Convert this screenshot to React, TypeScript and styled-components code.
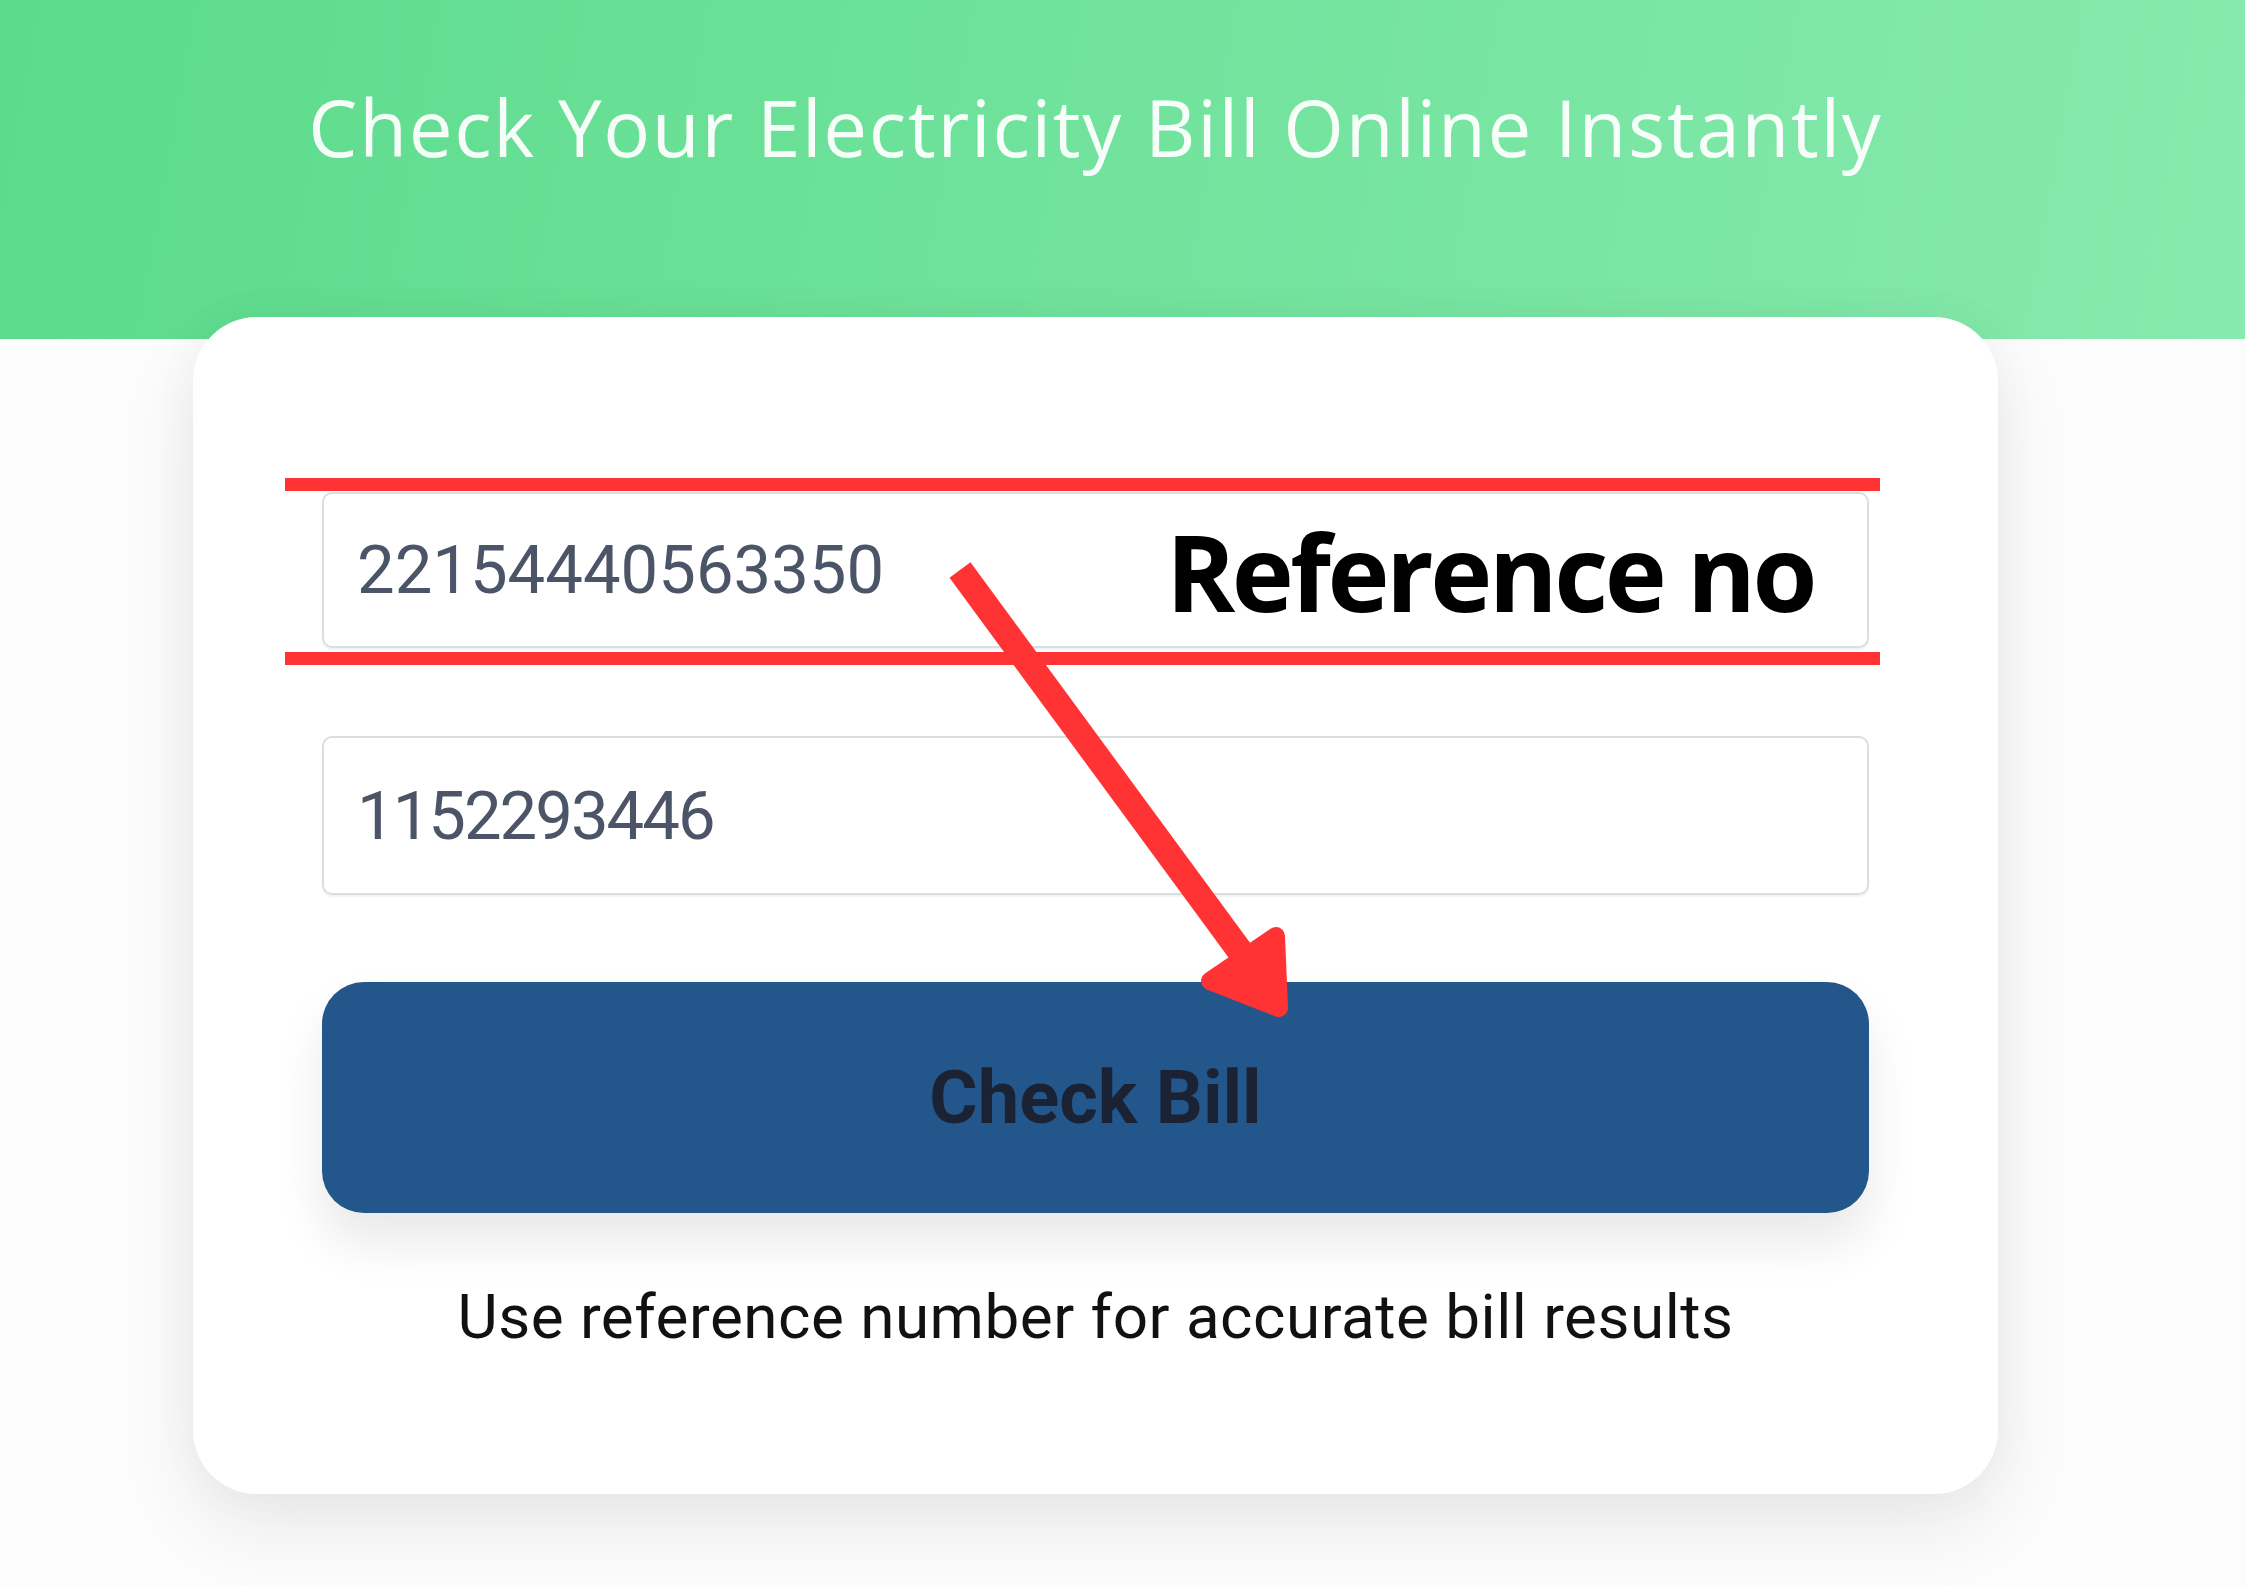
import React from "react";
import styled, { createGlobalStyle } from "styled-components";

const GlobalStyle = createGlobalStyle`
  html, body {
    margin: 0;
    padding: 0;
    background: #fcfcfc;
  }
  * {
    box-sizing: border-box;
  }
`;

const Page = styled.div`
  position: relative;
  width: 2245px;
  height: 1587px;
  overflow: hidden;
  background: #fcfcfc;
  font-family: Roboto, "Liberation Sans", sans-serif;
`;

const Hero = styled.header`
  height: 339px;
  padding-top: 88px;
  background: linear-gradient(100deg, #5bdb8b 0%, #6fe29b 45%, #87eaae 100%);
`;

const Column = styled.div`
  width: 1805px;
  margin-left: 193px;
`;

const Title = styled.h1`
  margin: 0;
  text-align: center;
  font-family: "Open Sans", Roboto, sans-serif;
  font-size: 78px;
  line-height: 1;
  font-weight: 400;
  letter-spacing: 1.7px;
  color: rgba(255, 255, 255, 0.94);
`;

const Card = styled.main`
  height: 1177px;
  margin-top: -22px;
  padding: 175px 129px 0;
  background: #ffffff;
  border-radius: 64px;
  box-shadow: 0 34px 80px rgba(0, 0, 0, 0.08), 0 0 50px rgba(0, 0, 0, 0.035);
  display: flex;
  flex-direction: column;
`;

const Field = styled.div<{ $height: number; $gap: number; $tracking?: number }>`
  height: ${({ $height }) => $height}px;
  margin-bottom: ${({ $gap }) => $gap}px;
  padding-left: 33px;
  display: flex;
  align-items: center;
  border: 2px solid #d9dee5;
  border-radius: 10px;
  box-shadow: 0 2px 2px rgba(30, 40, 60, 0.06);
  font-size: 67px;
  letter-spacing: ${({ $tracking = 0 }) => $tracking}px;
  color: #4b5567;
`;

const CheckButton = styled.button`
  height: 231px;
  width: 100%;
  border: none;
  border-radius: 42px;
  background: #23568a;
  box-shadow: 0 30px 50px rgba(0, 0, 0, 0.09);
  font-family: Roboto, "Liberation Sans", sans-serif;
  font-weight: 700;
  font-size: 74px;
  color: #1b2233;
  cursor: pointer;
`;

const Hint = styled.p`
  margin: 73px 0 0;
  text-align: center;
  font-size: 62px;
  line-height: 1;
  letter-spacing: 0.5px;
  color: #111111;
`;

/* annotation overlay drawn on top of the screenshot */
const RedRule = styled.div<{ $top: number }>`
  position: absolute;
  left: 285px;
  top: ${({ $top }) => $top}px;
  width: 1595px;
  height: 13px;
  background: #ff3334;
`;

const Callout = styled.span`
  position: absolute;
  left: 1166px;
  top: 509px;
  font-family: "Open Sans", "Liberation Sans", sans-serif;
  font-weight: 700;
  font-size: 105px;
  line-height: 1.2;
  letter-spacing: -3.5px;
  color: #000000;
`;

const ArrowLayer = styled.svg`
  position: absolute;
  left: 0;
  top: 0;
  pointer-events: none;
`;

const App: React.FC = () => {
  return (
    <Page>
      <GlobalStyle />
      <Hero>
        <Column>
          <Title>Check Your Electricity Bill Online Instantly</Title>
        </Column>
      </Hero>
      <Column>
        <Card>
          <Field $height={156} $gap={88}>22154440563350</Field>
          <Field $height={159} $gap={87} $tracking={-2}>1152293446</Field>
          <CheckButton>Check Bill</CheckButton>
          <Hint>Use reference number for accurate bill results</Hint>
        </Card>
      </Column>

      <RedRule $top={478} />
      <RedRule $top={652} />
      <Callout>Reference no</Callout>
      <ArrowLayer width="2245" height="1587" viewBox="0 0 2245 1587">
        <line x1="960" y1="570" x2="1248" y2="962" stroke="#ff3334" strokeWidth="26" />
        <polygon
          points="1276,936 1210,981 1279,1008"
          fill="#ff3334"
          stroke="#ff3334"
          strokeWidth="18"
          strokeLinejoin="round"
        />
      </ArrowLayer>
    </Page>
  );
};

export default App;
